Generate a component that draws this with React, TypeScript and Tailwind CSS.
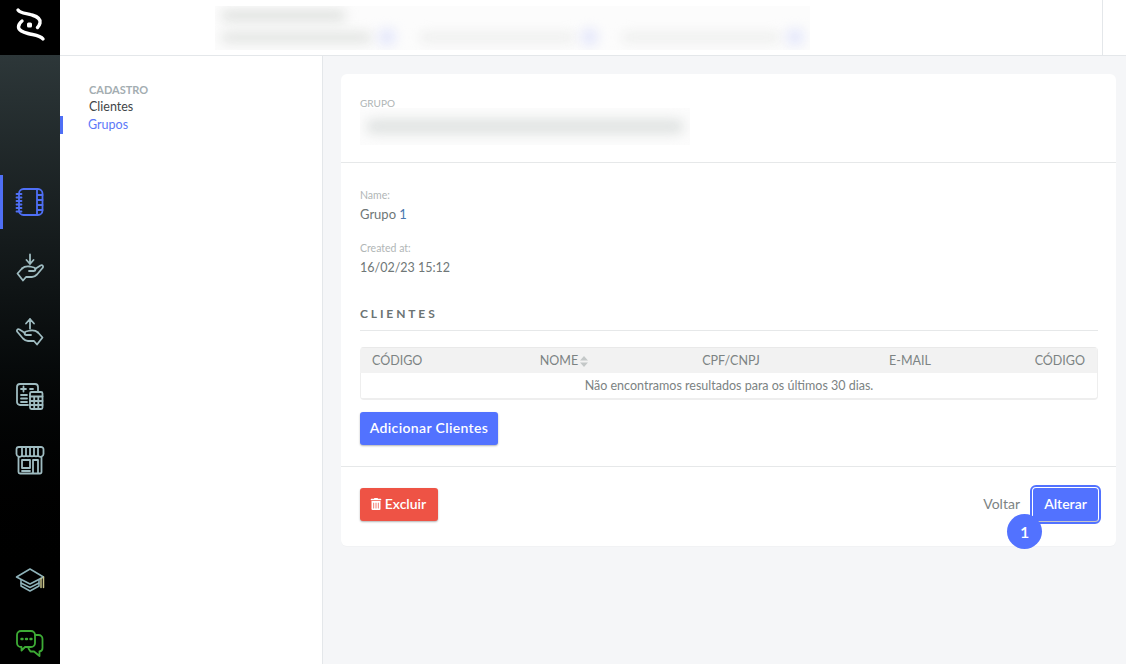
import { FaTrashAlt } from 'react-icons/fa';

const font = { fontFamily: '"Lato", "Noto Sans", sans-serif' };

const Logo = () => (
	<svg width="32" height="36" viewBox="14 7 32 36" fill="none" stroke="white" strokeWidth="3.4" strokeLinecap="round">
		<path d="M18 10C21 14 27 13 32 15C37 16.5 41 19 40 23C39.500 25 39 26 37.500 27.500" />
		<path d="M43 39C40 35 33 35 28 33.5C23 32 18.500 30.500 18.500 27C18.500 24.500 20 22.500 22 21" />
		<rect x="27" y="22.5" width="5" height="5" rx="1.5" fill="white" stroke="none" />
	</svg>
);

const NotebookIcon = () => (
	<svg width="30" height="30" viewBox="0 0 30 30" fill="none" stroke="#4f6ff5" strokeWidth="1.8" strokeLinecap="round" strokeLinejoin="round">
		<rect x="4" y="2" width="23.5" height="26" rx="4.5" />
		<path d="M1.5 7h5M1.5 10.5h5M1.5 14h5M1.5 17.5h5M1.5 21h5M1.5 24.5h5" />
		<path d="M22 2v26M22 8h5.5M22 13h5.5M22 18h5.5M22 23h5.5" />
	</svg>
);

const Hand = () => (
	<>
		<path d="M7 16.5c2-2 5-2.5 8-2l4 1c2 .5 2 3.5 0 3.500h-5" />
		<path d="M20 17l5.500-3.500c2-1 3.500 1 2 2.500L22 22.500c-1.500 1.500-3 2.500-5 2.500h-6L8 28.500 2.500 21.500 7 16.500" />
	</>
);

const HandDownIcon = () => (
	<svg width="30" height="30" viewBox="0 0 30 30" fill="none" stroke="#9fbcc1" strokeWidth="1.8" strokeLinecap="round" strokeLinejoin="round">
		<path d="M15 2.5V12M11.5 8l3.500 4 3.500-4" />
		<Hand />
	</svg>
);

const HandUpIcon = () => (
	<svg width="30" height="30" viewBox="0 0 30 30" fill="none" stroke="#9fbcc1" strokeWidth="1.8" strokeLinecap="round" strokeLinejoin="round">
		<path d="M15 12.5V3M11 7.5L15 3l4 4.500" />
		<g transform="translate(30 0) scale(-1 1)">
			<Hand />
		</g>
	</svg>
);

const CalcIcon = () => (
	<svg width="30" height="30" viewBox="0 0 30 30" fill="none" stroke="#9fbcc1" strokeWidth="1.8" strokeLinecap="round" strokeLinejoin="round">
		<path d="M13 24H5a3 3 0 0 1-3-3V6a3 3 0 0 1 3-3h15a3 3 0 0 1 3 3v4" />
		<path d="M6 8h5M8.5 5.5v5M15 8h3M6 14h6M6 17.5h6M6 21h6" />
		<rect x="15" y="11" width="12.5" height="17" rx="1.5" />
		<path d="M15 15.5h12.500M15 20h12.500M15 24h12.500M19.200 15.500V28M23.300 15.500V28" />
	</svg>
);

const StoreIcon = () => (
	<svg width="30" height="30" viewBox="0 0 30 30" fill="none" stroke="#9fbcc1" strokeWidth="1.8" strokeLinecap="round" strokeLinejoin="round">
		<path d="M4 2h22a2.500 2.500 0 0 1 2.500 2.500V9a3 3 0 0 1-5.500 1.500 3 3 0 0 1-4 0 3 3 0 0 1-4 0 3 3 0 0 1-4 0 3 3 0 0 1-4 0A3 3 0 0 1 1.500 9V4.500A2.500 2.500 0 0 1 4 2z" />
		<path d="M7 2.500V10M11 2.500V10M15 2.500V10M19 2.500V10M23 2.500V10" />
		<path d="M3.500 12v15a1.500 1.500 0 0 0 1.500 1.500h20a1.500 1.500 0 0 0 1.500-1.500V12" />
		<rect x="7" y="15" width="8" height="8" />
		<path d="M7 26h8M18 28V15h5v13" />
	</svg>
);

const CapIcon = () => (
	<svg width="30" height="26" viewBox="0 0 30 26" fill="none" stroke="#8fb3ba" strokeWidth="1.5" strokeLinecap="round" strokeLinejoin="round">
		<path d="M15 2L1.500 10 15 17l13.500-7z" />
		<path d="M6 13v6l9 5 9-5v-6" />
		<path d="M6 16l9 4.500 9-4.500" />
		<path d="M26 11.500v9M28.500 10v10.500" stroke="#c9c48d" />
	</svg>
);

const ChatIcon = () => (
	<svg width="28" height="28" viewBox="0 0 28 28" fill="none" stroke="#3dab35" strokeWidth="1.8" strokeLinecap="round" strokeLinejoin="round">
		<path d="M5 2h10a4 4 0 0 1 4 4v8a4 4 0 0 1-4 4H9l-3.500 3.500V18H5a4 4 0 0 1-4-4V6a4 4 0 0 1 4-4z" />
		<path d="M19 6h3.500A4 4 0 0 1 26.500 10v9a3.500 3.500 0 0 1-3 3.500V27L18 22.500h-3.500l-2-3" />
		<path d="M5.500 10h1M10 10h1M14.500 10h1" strokeWidth="2.4" />
	</svg>
);

const NavIcon = ({ children, active }: { children: React.ReactNode; active?: boolean }) => (
	<div className="relative flex h-[64.5px] items-center justify-center">
		{active && <div className="absolute left-0 top-[5px] h-[54px] w-[3px] bg-[#4f6ff5]" />}
		{children}
	</div>
);

const Blur = ({ className }: { className: string }) => <div className={`rounded-full blur-[6px] ${className}`} />;

export default function App() {
	return (
		<div className="flex h-[664px] w-[1126px] overflow-hidden bg-white text-[#6b7373]" style={font}>
			{/* sidebar */}
			<aside className="flex w-[60px] shrink-0 flex-col bg-black">
				<div className="flex h-[55px] shrink-0 items-center justify-center pb-[5px]">
					<Logo />
				</div>
				<div className="flex flex-1 flex-col bg-gradient-to-b from-[#2d3739] to-black to-[90%]">
					<div className="mt-[115px] flex flex-col">
						<NavIcon active>
							<NotebookIcon />
						</NavIcon>
						<NavIcon>
							<HandDownIcon />
						</NavIcon>
						<NavIcon>
							<HandUpIcon />
						</NavIcon>
						<NavIcon>
							<CalcIcon />
						</NavIcon>
						<NavIcon>
							<StoreIcon />
						</NavIcon>
					</div>
					<div className="mt-auto flex flex-col items-center gap-[36px] pb-[7px]">
						<CapIcon />
						<ChatIcon />
					</div>
				</div>
			</aside>

			<div className="flex min-w-0 flex-1 flex-col">
				{/* top bar */}
				<header className="flex h-[56px] shrink-0 border-b border-[#e4e7ea] bg-white">
					<div className="ml-[155px] mt-[6px] flex h-[44px] w-[595px] overflow-hidden bg-[#fcfcfc]">
						<div className="flex w-full flex-col justify-center gap-[7px] px-[6px]">
							<Blur className="h-[11px] w-[125px] bg-[#dfe1df]" />
							<div className="flex items-center gap-[6px]">
								<Blur className="h-[11px] w-[154px] bg-[#e2e4e2]" />
								<Blur className="h-[18px] w-[18px] bg-[#e4e7fb]" />
								<Blur className="ml-[18px] h-[9px] w-[158px] bg-[#ecedec]" />
								<Blur className="h-[18px] w-[18px] bg-[#e4e7fb]" />
								<Blur className="ml-[18px] h-[9px] w-[161px] bg-[#ecedec]" />
								<Blur className="h-[18px] w-[18px] bg-[#e4e7fb]" />
							</div>
						</div>
					</div>
					<div className="ml-auto mr-[23px] w-px bg-[#e4e7ea]" />
				</header>

				<div className="flex flex-1">
					{/* sub navigation */}
					<nav className="w-[263px] shrink-0 border-r border-[#e4e7ea] bg-white pt-[26px] text-[12.5px] leading-[18px]">
						<div className="pl-[29px] text-[11px] font-bold leading-[16px] text-[#a3adb1]">CADASTRO</div>
						<div className="pl-[29px] text-[#3f4648]">Clientes</div>
						<div className="border-l-[3px] border-[#4f6ff5] pl-[25px] text-[#5c78f8]">Grupos</div>
					</nav>

					{/* content */}
					<main className="flex-1 bg-[#f5f6f8] pl-[18px] pr-[10px] pt-[18px]">
						<section className="rounded-[6px] bg-white shadow-[0_1px_1px_rgba(0,0,0,0.02)]">
							<div className="h-[89px] border-b border-[#e6e8e9] pl-[19px] pr-[18px] pt-[23px]">
								<div className="text-[10px] leading-[12px] text-[#aeb4b4]">GRUPO</div>
								<div className="mt-[-1px] flex h-[37px] w-[330px] items-center overflow-hidden bg-[#fcfcfc] px-[6px]">
									<Blur className="h-[15px] w-full bg-[#e0e3e2]" />
								</div>
							</div>

							<div className="h-[304px] border-b border-[#e6e8e9] pl-[19px] pr-[18px] pt-[26px]">
								<div className="text-[10.5px] leading-[12px] text-[#b1b6b6]">Name:</div>
								<div className="mt-[5px] text-[13px] leading-[16px] text-[#6f7777]">
									Grupo <span className="text-[#4a78b0]">1</span>
								</div>
								<div className="mt-[20px] text-[10.5px] leading-[12px] text-[#b1b6b6]">Created at:</div>
								<div className="mt-[6px] text-[12.5px] leading-[16px] text-[#6f7777]">16/02/23 15:12</div>

								<div className="mt-[30px] border-b border-[#e6e8e9] pb-[8px] text-[12px] font-bold leading-[16px] tracking-[0.24em] text-[#6b7373]">
									CLIENTES
								</div>

								<div className="mt-[16px] overflow-hidden rounded-[4px] border-b-2 border-r border-[#eeeeee]">
									<div className="flex h-[26px] items-center border-t border-[#e9e9e9] bg-[#f2f2f2] pt-[1px] text-[12.5px] text-[#7c8383]">
										<div className="w-[120px] pl-[12px]">CÓDIGO</div>
										<div className="flex w-[168px] items-center justify-center gap-[2px]">
											NOME
											<svg width="8" height="11" viewBox="0 0 8 11" fill="#c4c8c8">
												<path d="M4 0l4 4.500H0zM4 11L0 6.500h8z" />
											</svg>
										</div>
										<div className="w-[166px] text-center">CPF/CNPJ</div>
										<div className="w-[192px] text-center">E-MAIL</div>
										<div className="flex-1 pr-[12px] text-right">CÓDIGO</div>
									</div>
									<div className="flex h-[25px] items-center justify-center border-l border-[#eeeeee] pt-[1px] text-[12.5px] text-[#7c8383]">
										Não encontramos resultados para os últimos 30 dias.
									</div>
								</div>

								<button className="mt-[12px] flex h-[33px] w-[138px] items-center justify-center rounded-[3px] bg-[#5272ff] pb-[2px] text-[14px] font-semibold tracking-[0.025em] text-white shadow-[0_1px_2px_rgba(0,0,0,0.3)]">
									Adicionar Clientes
								</button>
							</div>

							<div className="flex h-[79px] items-start pl-[19px] pr-[18px] pt-[21px]">
								<button className="flex h-[33px] w-[78px] items-center justify-center gap-[3px] rounded-[3px] bg-[#ee5345] pb-[2px] pr-[2px] text-[14px] font-semibold text-white shadow-[0_1px_2px_rgba(0,0,0,0.3)]">
									<FaTrashAlt className="text-[12px]" />
									Excluir
								</button>
								<div className="relative ml-auto flex items-center">
									<span className="mb-[2px] mr-[13px] text-[14px] text-[#7c8383]">Voltar</span>
									<button className="flex h-[33px] w-[65px] items-center justify-center rounded-[3px] bg-[#5272ff] pb-[2px] text-[14px] font-semibold text-white shadow-[0_2px_0_#c8c8c8] outline-2 outline-offset-1 outline-[#5272ff]">
										Alterar
									</button>
									<div className="absolute left-[24px] top-[26px] flex h-[35px] w-[35px] items-center justify-center rounded-full bg-[#5272ff] text-[16px] font-semibold text-white">
										1
									</div>
								</div>
							</div>
						</section>
					</main>
				</div>
			</div>
		</div>
	);
}
